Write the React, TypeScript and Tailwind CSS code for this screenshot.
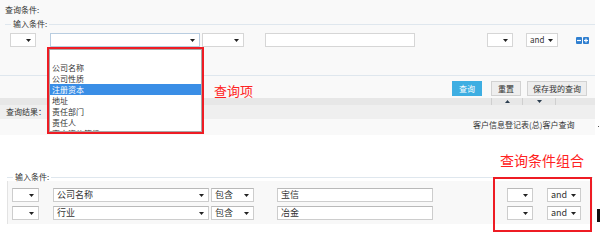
import { FC, ReactNode } from "react";

const Arrow: FC = () => (
  <svg width="5" height="3" viewBox="0 0 5 3" className="shrink-0">
    <path d="M0 0h5L2.5 3z" fill="#222" />
  </svg>
);

const Select: FC<{ className: string; text?: string; box?: string }> = ({ className, text, box }) => (
  <div
    className={`flex items-center justify-between bg-white pl-[3px] pr-[4px] h-full ${box ?? "border border-[#d6d6d6]"} ${className}`}
  >
    <span className="leading-[12px] whitespace-nowrap">{text}</span>
    <Arrow />
  </div>
);

const Input: FC<{ className: string; text?: string; box?: string }> = ({ className, text, box }) => (
  <div className={`flex items-center bg-white pl-[3px] h-full ${box ?? "border border-[#d6d6d6]"} ${className}`}>
    <span className="leading-[12px]">{text}</span>
  </div>
);

const Legend: FC<{ children: ReactNode }> = ({ children }) => (
  <div className="flex items-center h-[8px]">
    <div className="w-[6px] h-px bg-[#dfe7ee]" />
    <span className="px-[2px] text-[8px] leading-[10px] text-[#333]">{children}</span>
    <div className="flex-1 h-px bg-[#dfe7ee]" />
  </div>
);

const SquareIcon: FC<{ plus?: boolean }> = ({ plus }) => (
  <svg width="6" height="7" viewBox="0 0 6 7" className="shrink-0">
    <rect width="6" height="7" rx="1" fill="#2f7fd0" />
    <path d="M1 3.5h4" stroke="#fff" strokeWidth="1.2" />
    {plus && <path d="M3 1.5v4" stroke="#fff" strokeWidth="1.2" />}
  </svg>
);

const items = ["", "公司名称", "公司性质", "注册资本", "地址", "责任部门", "责任人", "客户资信等级"];

const bottomBox = "border border-[#cdcdcd] border-t-[#b9b9b9]";

export default function App() {
  return (
    <div
      className="relative w-[600px] h-[245px] overflow-hidden bg-white text-[#333]"
      style={{ fontFamily: '"Noto Sans CJK SC", "Noto Sans", sans-serif' }}
    >
      {/* first screenshot */}
      <div className="w-[595px] h-[135px] bg-[#f9f9f9] text-[8px]">
        <div className="h-[20px] pl-[5px] pt-[5px] leading-[10px]">查询条件:</div>
        <div className="pl-[5px]">
          <Legend>输入条件:</Legend>
        </div>
        <div className="flex items-center h-[14px] mt-[5px]">
          <Select className="ml-[10px] w-[26px]" />
          <Select className="ml-[14px] w-[150px]" box="border border-[#b9cde0]" />
          <Select className="ml-[2px] w-[42px]" />
          <Input className="ml-[21px] w-[150px]" />
          <Select className="ml-[72px] w-[26px]" />
          <Select className="ml-[13px] w-[32px]" text="and" />
          <div className="ml-[18px] flex gap-px">
            <SquareIcon />
            <SquareIcon plus />
          </div>
        </div>
        <div className="mt-[28px] h-px bg-[#dfe7ee]" />
        <div className="flex h-[15px] mt-[5px] text-[8px]">
          <div className="ml-[452px] w-[30px] flex items-center justify-center bg-[#3eaee2] text-white">查询</div>
          <div className="ml-[9px] w-[30px] flex items-center justify-center bg-[#eeeeee] border border-[#d2d2d2]">重置</div>
          <div className="ml-[6px] w-[60px] flex items-center justify-center bg-[#eeeeee] border border-[#d2d2d2]">
            保存我的查询
          </div>
        </div>
        <div className="mt-[2px] h-[7px] bg-[#e7e7e7] flex">
          <div className="ml-[491px] w-[32px] flex items-center justify-center border-x border-[#cfcfcf]">
            <svg width="5" height="3" viewBox="0 0 5 3">
              <path d="M0 3h5L2.5 0z" fill="#2c3e50" />
            </svg>
          </div>
          <div className="w-[33px] flex items-center justify-center border-r border-[#cfcfcf]">
            <svg width="5" height="3" viewBox="0 0 5 3">
              <path d="M0 0h5L2.5 3z" fill="#2c3e50" />
            </svg>
          </div>
        </div>
        <div className="h-[14px] bg-[#efefef] flex items-center pl-[6px] leading-[10px]">查询结果：</div>
        <div className="flex items-center h-[12px] text-[8px]">
          <span className="ml-[473px] leading-[10px]">客户信息登记表(总)客户查询</span>
        </div>
      </div>

      <div className="absolute left-[598px] top-[126px] w-px h-px bg-[#555]" />

      {/* dropdown list */}
      <div className="absolute left-[47px] top-[47px] w-[157px] h-[87px] border-2 border-[#ee1c24]">
        <div className="h-full border border-[#a8a8a8] bg-white overflow-hidden pt-px text-[8px]">
          {items.map((t, i) => (
            <div
              key={i}
              className={`h-[11px] leading-[11px] pl-[2px] ${i === 3 ? "bg-[#3a8ee6] text-white" : "text-[#333]"}`}
            >
              {t}
            </div>
          ))}
        </div>
      </div>
      <div className="absolute left-[214px] top-[83px] text-[13px] leading-[15px] text-[#f22]">查询项</div>

      {/* second screenshot */}
      <div className="h-[38px] pt-[18px]">
        <div className="ml-[500px] text-[14px] leading-[15px] text-[#f22]">查询条件组合</div>
      </div>
      <div className="ml-[7px] w-[586px]">
        <Legend>输入条件:</Legend>
        <div className="bg-[#f8f8f8] border-l border-[#e3e3e3] h-[43px] pt-[7px] text-[9px]">
          {[
            ["公司名称", "宝信"],
            ["行业", "冶金"],
          ].map(([f, v], i) => (
            <div key={i} className={`flex items-center h-[14px] ${i ? "mt-[4px]" : ""}`}>
              <Select className="ml-[4px] w-[27px]" box={bottomBox} />
              <Select className="ml-[14px] w-[156px]" text={f} box={bottomBox} />
              <Select className="ml-[2px] w-[43px]" text="包含" box={bottomBox} />
              <Input className="ml-[23px] w-[156px]" text={v} box={bottomBox} />
              <Select className="ml-[74px] w-[26px]" box={bottomBox} />
              <Select className="ml-[14px] w-[34px]" text="and" box={bottomBox} />
            </div>
          ))}
        </div>
      </div>

      <div className="absolute left-[493px] top-[177px] w-[99px] h-[55px] border-2 border-[#ee1c24]" />
      <div className="absolute left-[597px] top-[209px] w-[3px] h-[13px] bg-[#111]" />
    </div>
  );
}
